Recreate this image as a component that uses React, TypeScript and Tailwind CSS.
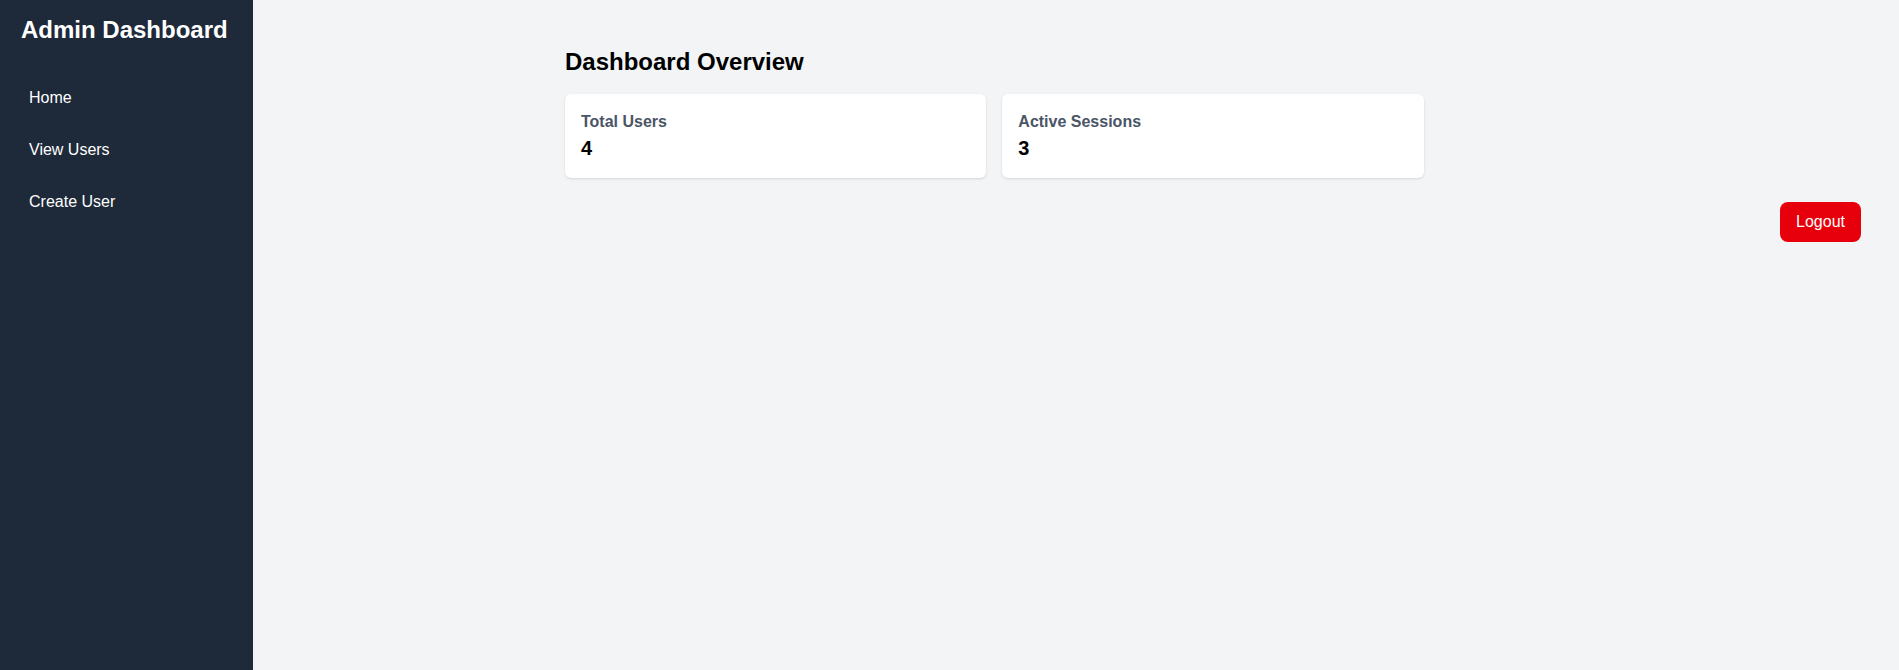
import React from 'react';

const navItems = ['Home', 'View Users', 'Create User'];

const stats = [
  { label: 'Total Users', value: 4 },
  { label: 'Active Sessions', value: 3 },
];

export default function App() {
  return (
    <div className="flex min-h-screen bg-gray-100 font-['Liberation_Sans',Arial,sans-serif]">
      <aside className="w-[253px] shrink-0 bg-[#1e2939] pl-[21px] pr-5 pt-[14px] text-white">
        <h1 className="mb-8 text-2xl font-bold">Admin Dashboard</h1>
        <nav className="flex flex-col gap-3">
          {navItems.map((item) => (
            <a key={item} href="#" className="rounded px-2 py-2 text-base text-white">
              {item}
            </a>
          ))}
        </nav>
      </aside>

      <main className="flex-1 pl-[312px] pr-[38px] pt-[46px]">
        <h2 className="mb-4 text-2xl font-bold text-black">Dashboard Overview</h2>
        <div className="grid grid-cols-3 gap-4">
          {stats.map((s) => (
            <div key={s.label} className="rounded-md bg-white p-4 shadow-sm">
              <div className="text-base font-bold text-gray-600">{s.label}</div>
              <div className="text-xl font-bold text-black">{s.value}</div>
            </div>
          ))}
        </div>
        <div className="mt-6 flex justify-end">
          <button className="rounded-lg bg-red-600 px-4 py-2 text-base text-white">Logout</button>
        </div>
      </main>
    </div>
  );
}
